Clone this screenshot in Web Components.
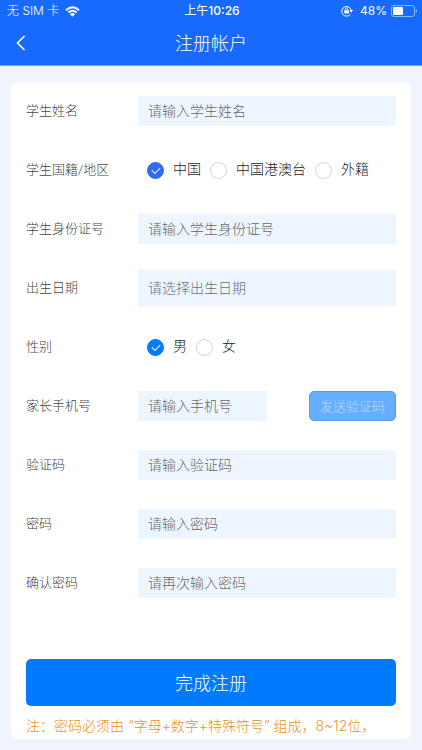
<!DOCTYPE html>
<html lang="zh-CN">
<head>
<meta charset="utf-8">
<meta name="viewport" content="width=device-width, initial-scale=1">
<title>注册帐户</title>
<style>
  body {
    margin: 0;
    min-height: 100vh;
    background: #f0f4ff;
    color: #555;
    font-family: Roboto, "Noto Sans CJK SC", sans-serif;
    font-size: 14px;
    font-weight: 300;
  }
</style>
</head>
<body>
<register-page></register-page>

<script>
class BaseElement extends HTMLElement {
  connectedCallback() {
    if (this.shadowRoot) return;
    this.attachShadow({ mode: 'open' }).innerHTML = `<style>*{box-sizing:border-box}</style>${this.render()}`;
  }
}

customElements.define('status-bar', class extends BaseElement {
  render() {
    return `
    <style>
      :host { display: grid; grid-template-columns: 1fr auto 1fr; align-items: center; height: 22px; padding: 0 5px 0 7px;
        color: #fff; font: 400 12px/22px Inter, "Noto Sans CJK SC", sans-serif; }
      div { display: flex; align-items: center; }
      .left { gap: 6px; font-weight: 300; }
      .time b { font-weight: 500; }
      .right { justify-content: flex-end; gap: 4px; }
      .right svg:first-child { margin-right: 3px; }
      svg { display: block; }
    </style>
    <div class="left"><span>无 SIM 卡</span>
      <svg width="15" height="11" viewBox="0 0 15 11" fill="none" stroke="#fff" stroke-width="2">
        <path d="M1 4.2Q7.500-1.800 14 4.200M3.400 6.600Q7.500 2.900 11.600 6.600"/>
        <path d="M7.500 10.700L5 8.200Q7.500 6 10 8.200Z" fill="#fff" stroke="none"/>
      </svg></div>
    <div class="time"><span>上午<b>10:26</b></span></div>
    <div class="right">
      <svg width="12" height="12" viewBox="0 0 12 12" fill="none" stroke="#fff">
        <path d="M9.300 9.300A4.800 4.800 0 1 1 10.300 5.800"/>
        <path d="M8.400 5.300h3.600l-1.800 2.400z" fill="#fff" stroke="none"/>
        <path d="M4.300 5.500V4.300a1.300 1.300 0 0 1 2.600 0v1.200" stroke-width=".9"/>
        <rect x="3.300" y="5.200" width="4.600" height="3.200" rx=".4" fill="#fff" stroke="none"/>
      </svg>
      <span>48%</span>
      <svg width="26" height="12" viewBox="0 0 26 12">
        <rect x=".5" y=".5" width="23" height="11" rx="2.500" fill="none" stroke="#fff" stroke-opacity=".5"/>
        <rect x="2" y="2" width="10" height="8" rx="1" fill="#fff"/>
        <path d="M24.700 4v4q1.300-.5 1.300-2t-1.300-2z" fill="#fff" fill-opacity=".5"/>
      </svg>
    </div>`;
  }
});

customElements.define('nav-bar', class extends BaseElement {
  render() {
    return `
    <style>
      :host { display: grid; grid-template-columns: 44px 1fr 44px; align-items: center; height: 43px; color: #fff; }
      button { height: 42px; padding: 0 0 2px 16px; border: 0; background: none; cursor: pointer; }
      svg { display: block; }
      h1 { margin: 0; font-size: 18px; font-weight: 300; line-height: 26px; text-align: center; }
    </style>
    <button type="button" aria-label="返回">
      <svg width="10" height="16" viewBox="0 0 10 16" fill="none" stroke="#fff" stroke-width="1.600"><path d="M8.500 1L1.500 8l7 7"/></svg>
    </button>
    <h1><slot></slot></h1>`;
  }
});

const rowStyle = `
  :host { display: block; }
  .row { display: grid; grid-template-columns: 112px minmax(0, 1fr); align-items: center; height: 36px; margin: 0; padding: 0; border: 0; }
  .name { font-size: 13px; line-height: 20px; color: #444; }`;

customElements.define('text-row', class extends BaseElement {
  render() {
    const a = n => this.getAttribute(n);
    return `
    <style>${rowStyle}
      .field { display: flex; justify-content: space-between; gap: 42px; }
      input { flex: 1; min-width: 0; width: 100%; height: 30px; margin: 0; padding: 0 10px; border: 0; border-radius: 0;
        background: #edf6ff; color: #333; font: inherit; outline-offset: -1px; }
      input::placeholder { color: #666; opacity: 1; }
      :host([picker]) input { height: 36px; }
      :host([picker]) input::placeholder { color: #6b7080; }
    </style>
    <div class="row">
      <label class="name" for="field">${a('label')}</label>
      <div class="field"><input id="field" type="${a('type') || 'text'}" placeholder="${a('placeholder')}" ${this.hasAttribute('picker') ? 'readonly' : ''}><slot></slot></div>
    </div>`;
  }
});

customElements.define('radio-row', class extends BaseElement {
  render() {
    const options = this.getAttribute('options').split(',').map((text, i) => `
      <label><input type="radio" name="choice" ${i === 0 ? 'checked' : ''}><span>${text}</span></label>`).join('');
    return `
    <style>${rowStyle}
      .options { display: flex; gap: 9px; padding-left: 9px; }
      label { display: flex; align-items: center; gap: 9px; color: #222; line-height: 20px; white-space: nowrap; }
      label span { padding-bottom: 2px; }
      input { appearance: none; display: grid; place-items: center; flex: none; width: 17px; height: 17px; margin: 0;
        border: 1px solid #d2d2d2; border-radius: 50%; background: #fff; }
      input:checked { border-color: var(--radio, #007aff); background: var(--radio, #007aff); }
      input:checked::before { content: ""; width: 7px; height: 4px; margin-bottom: 2px;
        border: solid #fff; border-width: 0 0 1px 1px; transform: rotate(-45deg); }
    </style>
    <div class="row" role="radiogroup" aria-labelledby="name">
      <span class="name" id="name">${this.getAttribute('label')}</span>
      <div class="options">${options}</div>
    </div>`;
  }
});

customElements.define('action-button', class extends BaseElement {
  render() {
    return `
    <style>
      :host { display: block; }
      button { display: block; width: 100%; height: 47px; margin: 0; padding: 0 0 2px; border: 0; border-radius: 5px;
        background: #007aff; color: #fff; font: inherit; font-size: 18px; cursor: pointer; }
      :host([small]) { flex: none; width: 87px; }
      :host([small]) button { height: 30px; border: 1px solid #4f9bf5; background: #66afff; color: #bddcff; font-size: 13px; }
    </style>
    <button type="button" ${this.hasAttribute('small') ? 'disabled' : ''}><slot></slot></button>`;
  }
});

customElements.define('form-card', class extends BaseElement {
  render() {
    return `
    <style>
      :host { display: block; padding: 11px 15px 3px; border-radius: 6px; background: #fff; }
      .rows { display: grid; gap: 23px; }
      .submit { margin-top: 58px; }
      p { margin: 10px 0 0; font-family: Inter, "Noto Sans CJK SC", sans-serif; line-height: 20px; color: #e3941f; }
    </style>
    <div class="rows"><slot></slot></div>
    <div class="submit"><slot name="submit"></slot></div>
    <p><slot name="note"></slot></p>`;
  }
});

customElements.define('register-page', class extends BaseElement {
  render() {
    return `
    <style>
      :host { display: block; }
      header { background: #186aff; border-bottom: 1px solid #77a8ff; }
      main { padding: 16px 11px 11px; }
      .nationality { --radio: #2f69f5; }
    </style>
    <header><status-bar></status-bar><nav-bar>注册帐户</nav-bar></header>
    <main>
      <form-card>
        <text-row label="学生姓名" placeholder="请输入学生姓名"></text-row>
        <radio-row class="nationality" label="学生国籍/地区" options="中国,中国港澳台,外籍"></radio-row>
        <text-row label="学生身份证号" placeholder="请输入学生身份证号"></text-row>
        <text-row picker label="出生日期" placeholder="请选择出生日期"></text-row>
        <radio-row label="性别" options="男,女"></radio-row>
        <text-row type="tel" label="家长手机号" placeholder="请输入手机号"><action-button small>发送验证码</action-button></text-row>
        <text-row label="验证码" placeholder="请输入验证码"></text-row>
        <text-row type="password" label="密码" placeholder="请输入密码"></text-row>
        <text-row type="password" label="确认密码" placeholder="请再次输入密码"></text-row>
        <action-button slot="submit">完成注册</action-button>
        <span slot="note">注：密码必须由 “字母+数字+特殊符号” 组成，8~12位，</span>
      </form-card>
    </main>`;
  }
});
</script>
</body>
</html>
